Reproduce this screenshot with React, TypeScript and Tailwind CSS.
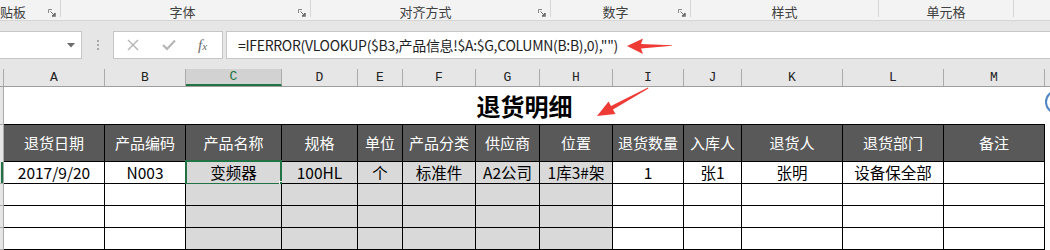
import React from "react";

const CJK = { fontFamily: '"Noto Sans CJK SC", "Noto Sans", sans-serif' };

type Col = { l: string; w: string; h: string; d: string };
const cols: Col[] = [
  { l: "A", w: "w-[101px]", h: "退货日期", d: "2017/9/20" },
  { l: "B", w: "w-[81px]", h: "产品编码", d: "N003" },
  { l: "C", w: "w-[96px]", h: "产品名称", d: "变频器" },
  { l: "D", w: "w-[76px]", h: "规格", d: "100HL" },
  { l: "E", w: "w-[45px]", h: "单位", d: "个" },
  { l: "F", w: "w-[73px]", h: "产品分类", d: "标准件" },
  { l: "G", w: "w-[64px]", h: "供应商", d: "A2公司" },
  { l: "H", w: "w-[73px]", h: "位置", d: "1库3#架" },
  { l: "I", w: "w-[71px]", h: "退货数量", d: "1" },
  { l: "J", w: "w-[58px]", h: "入库人", d: "张1" },
  { l: "K", w: "w-[101px]", h: "退货人", d: "张明" },
  { l: "L", w: "w-[101px]", h: "退货部门", d: "设备保全部" },
  { l: "M", w: "w-[101px]", h: "备注", d: "" },
];

function Launcher() {
  return (
    <svg width="8" height="8" viewBox="0 0 8 8" className="shrink-0">
      <path d="M0.5 4 V0.5 H4" fill="none" stroke="#8a8a8a" strokeWidth="1" />
      <path d="M7.5 4 V7.5 H4" fill="none" stroke="#8a8a8a" strokeWidth="1" />
      <path d="M2.5 2.5 L6.5 6.5 M6.5 4 V6.5 H4" fill="none" stroke="#6a6a6a" strokeWidth="1" />
    </svg>
  );
}

function Group({ w, label, launcher, pad }: { w: string; label: string; launcher?: boolean; pad?: string }) {
  return (
    <div className={`${w} h-full flex items-start shrink-0`}>
      <div className={`flex-1 h-[20px] flex items-center justify-center pt-[3px] text-[13px] text-[#404040] ${pad ?? ""}`} style={CJK}>
        <span>{label}</span>
      </div>
      {launcher && (
        <div className="w-[16px] h-[20px] flex items-center justify-center pt-[5px]">
          <Launcher />
        </div>
      )}
      <div className="w-px h-[17px] bg-[#d6d6d6]" />
    </div>
  );
}

export default function App() {
  return (
    <div className="w-[1050px] h-[250px] overflow-hidden bg-white relative" style={CJK}>
      {/* Ribbon group labels */}
      <div className="h-[21px] bg-[#f3f3f3] border-b border-[#d5d5d5] flex overflow-hidden">
        <div className="w-[61px] h-full flex items-start shrink-0">
          <div className="w-[44px] h-[20px] flex items-center pt-[3px] overflow-hidden">
            <span className="ml-[-13px] text-[13px] text-[#404040] whitespace-nowrap">剪贴板</span>
          </div>
          <div className="w-[16px] h-[20px] flex items-center justify-center pt-[5px]">
            <Launcher />
          </div>
          <div className="w-px h-[17px] bg-[#d6d6d6]" />
        </div>
        <Group w="w-[250px]" label="字体" launcher pad="pl-[10px]" />
        <Group w="w-[240px]" label="对齐方式" launcher pad="pl-[6px]" />
        <Group w="w-[140px]" label="数字" launcher pad="pl-[6px]" />
        <Group w="w-[188px]" label="样式" />
        <Group w="w-[135px]" label="单元格" />
      </div>

      {/* Formula bar strip */}
      <div className="h-[48px] bg-[#e6e6e6] pt-[10px] pb-[10px] flex">
        <div className="w-[82px] h-[28px] bg-white border border-l-0 border-[#c6c6c6] flex items-center relative overflow-hidden">
          <span className="ml-[-9px] text-[14px] text-[#2b579a]">3</span>
          <svg width="8" height="5" viewBox="0 0 8 5" className="absolute left-[67px] top-[11px]">
            <path d="M0 0 H8 L4 4.5 Z" fill="#6b6b6b" />
          </svg>
        </div>
        <div className="w-[30px] h-[28px] flex flex-col items-center justify-center gap-[2px] ml-[1px]">
          <div className="w-[2px] h-[2px] bg-[#a8a8a8]" />
          <div className="w-[2px] h-[2px] bg-[#a8a8a8]" />
          <div className="w-[2px] h-[2px] bg-[#a8a8a8]" />
        </div>
        <div className="w-[110px] h-[28px] bg-white border border-[#c6c6c6] flex items-center">
          <svg width="12" height="12" viewBox="0 0 12 12" className="ml-[13px]">
            <path d="M1 1 L11 11 M11 1 L1 11" stroke="#b4b4b4" strokeWidth="1.4" />
          </svg>
          <svg width="14" height="12" viewBox="0 0 14 12" className="ml-[23px]">
            <path d="M1 6 L5 10 L13 1.5" fill="none" stroke="#b4b4b4" strokeWidth="2" />
          </svg>
          <span className="ml-[22px] text-[15px] italic text-[#6a6a6a]" style={{ fontFamily: '"Liberation Serif", serif' }}>
            f<span className="text-[11px]">x</span>
          </span>
        </div>
        <div className="flex-1 ml-[3px] h-[28px] bg-white border border-r-0 border-[#c6c6c6] flex items-center pl-[11px]">
          <span className="text-[14px] text-[#1e1e1e] whitespace-nowrap tracking-[-0.3px]">=IFERROR(VLOOKUP($B3,产品信息!$A:$G,COLUMN(B:B),0),"")</span>
        </div>
      </div>

      {/* Column headers */}
      <div className="h-[18px] flex bg-[#e6e6e6] border-b border-[#9e9e9e]">
        <div className="w-[4px] border-r border-[#ababab] shrink-0" />
        {cols.map((c) => (
          <div
            key={c.l}
            className={`${c.w} shrink-0 border-r border-[#ababab] flex items-center justify-center text-[13px] ${
              c.l === "C" ? "bg-[#d2d2d2] text-[#217346] border-b-2 border-b-[#217346]" : "text-[#222]"
            }`}
            style={{ fontFamily: '"Liberation Mono", monospace' }}
          >
            {c.l}
          </div>
        ))}
        <div className="flex-1" />
      </div>

      {/* Title row */}
      <div className="h-[37px] flex">
        <div className="w-[4px] bg-[#e6e6e6] border-r border-[#ababab] shrink-0" />
        <div className="w-[1041px] flex items-center justify-center pt-[1px] text-[24px] font-bold text-black">退货明细</div>
      </div>

      {/* Header row */}
      <div className="h-[38px] flex">
        <div className="w-[4px] bg-[#e6e6e6] border-r border-t border-[#ababab] shrink-0" />
        {cols.map((c) => (
          <div
            key={c.l}
            className={`${c.w} shrink-0 bg-[#595959] border-r border-t border-b border-black flex items-center justify-center text-[15px] text-white`}
          >
            {c.h}
          </div>
        ))}
      </div>

      {/* Data rows */}
      {[0, 1, 2, 3].map((r) => (
        <div key={r} className="h-[22px] flex">
          <div className="w-[4px] bg-[#e6e6e6] border-r border-b border-[#ababab] shrink-0 relative">
            {r === 0 && <div className="absolute right-0 top-0 w-[2px] h-[21px] bg-[#217346]" />}
          </div>
          {cols.map((c, i) => {
            const gray = i >= 2 && i <= 7;
            return (
              <div
                key={c.l}
                className={`${c.w} shrink-0 relative border-r border-b border-black flex items-center justify-center text-[15.5px] text-black ${
                  gray ? "bg-[#d9d9d9]" : "bg-white"
                }`}
              >
                {r === 0 ? c.d : ""}
                {r === 0 && c.l === "C" && (
                  <>
                    <div className="absolute left-[-1px] top-[-2px] w-[97px] h-[25px] border-2 border-[#217346]" />
                    <div className="absolute right-[-4px] bottom-[-4px] w-[6px] h-[6px] bg-[#217346] border border-white" />
                  </>
                )}
              </div>
            );
          })}
        </div>
      ))}

      {/* Annotations overlay */}
      <svg className="absolute left-0 top-0 pointer-events-none" width="1050" height="250" viewBox="0 0 1050 250">
        <polygon points="627,46 643,38.5 641,44 672,45.2 672,45.8 641,48.5 643,54" fill="#ef3b36" />
        <polygon points="597,116 608.6,101.6 611,106 648,87.6 648.4,88.4 613,109.6 615.4,114" fill="#ef3b36" />
        <circle cx="1057" cy="102" r="11" fill="none" stroke="#4f86c6" strokeWidth="2" />
      </svg>
    </div>
  );
}
